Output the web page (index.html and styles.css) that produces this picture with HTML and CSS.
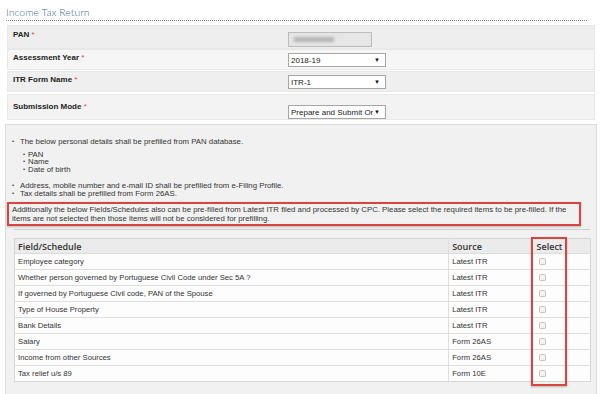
FILE: index.html
```
<!DOCTYPE html>
<html>
<head>
<meta charset="utf-8">
<link rel="stylesheet" href="styles.css">
</head>
<body>
<div class="page">
  <h1 class="title">Income Tax Return</h1>
  <div class="form">
    <div class="row r1">
      <div class="lbl">PAN <span class="req">*</span></div>
      <div class="fld"><div class="pan-input"><span class="blur"></span></div></div>
    </div>
    <div class="row r2">
      <div class="lbl">Assessment Year <span class="req">*</span></div>
      <div class="fld"><div class="sel"><span class="val">2018-19</span><span class="arr">▼</span></div></div>
    </div>
    <div class="row r3">
      <div class="lbl">ITR Form Name <span class="req">*</span></div>
      <div class="fld"><div class="sel"><span class="val">ITR-1</span><span class="arr">▼</span></div></div>
    </div>
    <div class="row r4">
      <div class="lbl">Submission Mode <span class="req">*</span></div>
      <div class="fld"><div class="sel"><span class="val">Prepare and Submit Or</span><span class="arr">▼</span></div></div>
    </div>
  </div>

  <div class="panel">
    <ul class="info">
      <li>The below personal details shall be prefilled from PAN database.
        <ul class="sub">
          <li>PAN</li>
          <li>Name</li>
          <li>Date of birth</li>
        </ul>
      </li>
      <li class="gap">Address, mobile number and e-mail ID shall be prefilled from e-Filing Profile.</li>
      <li>Tax details shall be prefilled from Form 26AS.</li>
    </ul>
    <div class="note">Additionally the below Fields/Schedules also can be pre-filled from Latest ITR filed and processed by CPC. Please select the required items to be pre-filled. If the items are not selected then those items will not be considered for prefilling.</div>
    <div class="rule"></div>
    <div class="tablewrap">
      <table class="grid">
        <thead>
          <tr><th class="c1">Field/Schedule</th><th class="c2">Source</th><th class="c3">Select</th></tr>
        </thead>
        <tbody>
          <tr><td>Employee category</td><td>Latest ITR</td><td><span class="cb"></span></td></tr>
          <tr><td>Whether person governed by Portuguese Civil Code under Sec 5A ?</td><td>Latest ITR</td><td><span class="cb"></span></td></tr>
          <tr><td>If governed by Portuguese Civil code, PAN of the Spouse</td><td>Latest ITR</td><td><span class="cb"></span></td></tr>
          <tr><td>Type of House Property</td><td>Latest ITR</td><td><span class="cb"></span></td></tr>
          <tr><td>Bank Details</td><td>Latest ITR</td><td><span class="cb"></span></td></tr>
          <tr><td>Salary</td><td>Form 26AS</td><td><span class="cb"></span></td></tr>
          <tr><td>Income from other Sources</td><td>Form 26AS</td><td><span class="cb"></span></td></tr>
          <tr><td>Tax relief u/s 89</td><td>Form 10E</td><td><span class="cb"></span></td></tr>
        </tbody>
      </table>
      <div class="mark"></div>
    </div>
  </div>
</div>
</body>
</html>
```
FILE: styles.css
```
* { box-sizing: border-box; }
html, body { margin: 0; padding: 0; background: #ffffff; }
body { font-family: "Liberation Sans", Arial, sans-serif; color: #333; }
.page { width: 600px; height: 394px; overflow: hidden; }

.title {
  margin: 0 13px 0 6px;
  padding-top: 5px;
  height: 21px;
  font-family: Lato, "Open Sans", sans-serif;
  font-weight: 300;
  font-size: 10.5px;
  line-height: 15px;
  color: #3f7196;
  border-bottom: 1px dotted #8a8a8a;
}

.form { margin: 4px 5px 0 7px; display: flex; flex-direction: column; }
.row {
  display: flex;
  align-items: flex-start;
  border: 1px solid #e8e8e8;
  font-size: 8px;
}
.r1 { height: 24px; background: #eeeeee; }
.r2 { height: 21px; background: #f6f6f6; }
.r3 { height: 21px; background: #efefef; margin-top: 1px; }
.r4 { height: 26px; background: #f3f3f3; margin-top: 2px; }

.lbl {
  width: 280px;
  padding-left: 5px;
  font-weight: bold;
  color: #222;
  line-height: 10px;
}
.req { color: #e0443f; font-weight: normal; }
.r1 .lbl { padding-top: 4px; }
.r2 .lbl, .r3 .lbl { padding-top: 3px; }
.r4 .lbl { padding-top: 7px; }

.fld { flex: none; }
.r1 .fld { padding-top: 6px; }
.r2 .fld, .r3 .fld { padding-top: 3px; }
.r4 .fld { padding-top: 10px; }

.pan-input {
  width: 84px;
  height: 15px;
  background: #e6e6e6;
  border: 1px solid #bcbcbc;
  position: relative;
  overflow: hidden;
}
.blur {
  position: absolute;
  left: 5px; top: 4px;
  width: 40px; height: 5px;
  background: #b5b5b5;
  filter: blur(1.5px);
}

.sel {
  width: 98px;
  height: 14px;
  background: #ffffff;
  border: 1px solid #a6a6a6;
  display: flex;
  align-items: center;
  padding: 0 5px 0 2px;
  font-size: 8px;
  color: #222;
  overflow: hidden;
}
.val { white-space: nowrap; overflow: hidden; flex: 1; }
.arr { font-size: 6px; color: #111; margin-left: 1px; flex: none; }

.panel {
  margin: 4px 3px 0 5px;
  height: 280px;
  background: #f1f1f1;
  border: 1px solid #dcdcdc;
  padding: 13px 6px 0 1px;
}

.info {
  margin: 0;
  padding: 0;
  list-style: none;
  font-size: 7.8px;
  line-height: 7.5px;
  color: #333;
}
.info li { position: relative; padding-left: 13px; }
.info > li::before {
  content: "•";
  position: absolute;
  left: 5px;
  top: 0;
  font-size: 6px;
}
.sub { list-style: none; margin: 5px 0 0 0; padding: 0; }
.sub li { padding-left: 8px; }
.sub li::before {
  content: "•";
  position: absolute;
  left: 3px;
  top: 0;
  font-size: 6px;
}
.info > li.gap { margin-top: 9px; }

.note {
  margin-top: 5px;
  width: 574px;
  border: 2px solid #d9443f;
  box-shadow: 0 1px 2px rgba(0,0,0,0.25);
  padding: 2px 3px 1px 3px;
  font-size: 7.8px;
  line-height: 8.5px;
  color: #333;
}

.rule {
  margin: 3px 0 0 7px;
  height: 1px;
  background: #cfcfcf;
}

.tablewrap { position: relative; margin: 8px 0 0 7px; }
.grid {
  width: 577px;
  border-collapse: collapse;
  background: #fdfdfd;
  border: 1px solid #d6d6d6;
  font-size: 7.7px;
  color: #333;
}
.grid th {
  height: 15px;
  padding: 0 3px;
  background: #ebebeb;
  text-align: left;
  font-family: "Open Sans", sans-serif;
  font-weight: 600;
  font-size: 9px;
  color: #333;
  border-bottom: 1px solid #dcdcdc;
}
.grid td {
  height: 16px;
  padding: 0 3px;
  border-top: 1px solid #dedede;
  line-height: 9px;
}
.grid td:nth-child(2), .grid th.c2 { border-left: 1px solid #dedede; }
.grid th.c3 { padding-left: 6px; }
.c1 { width: 435px; }
.c2 { width: 82px; }
.c3 { width: 60px; }
.cb {
  display: block;
  width: 7px;
  height: 7px;
  margin-left: 5px;
  border: 1px solid #c4c4c4;
  border-radius: 1.5px;
  background: #f2f2f2;
}

.mark {
  position: absolute;
  left: 517px;
  top: -1px;
  width: 36px;
  height: 149px;
  border: 2px solid #d9443f;
  box-shadow: 0 1px 2px rgba(0,0,0,0.25);
  pointer-events: none;
}
```
